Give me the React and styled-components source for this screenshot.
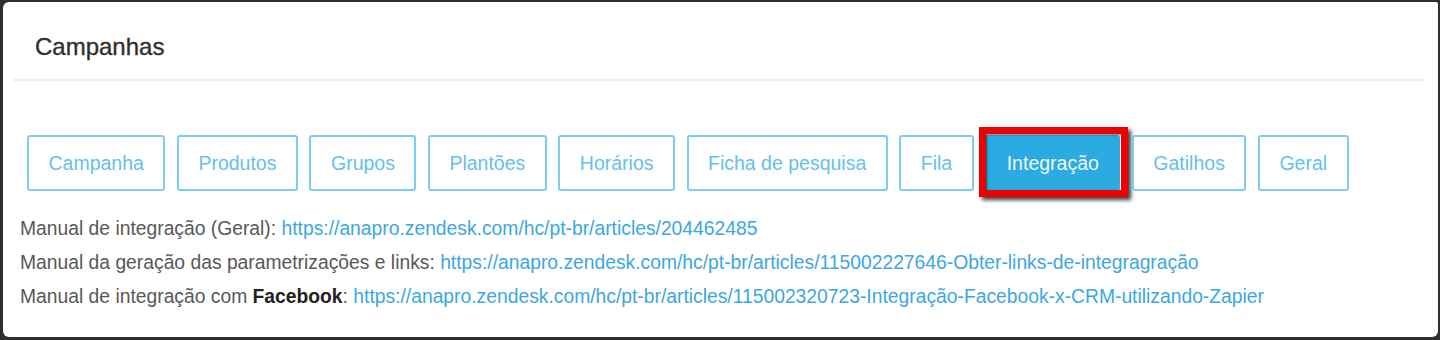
import React from "react";
import styled, {createGlobalStyle} from "styled-components";

const tabs = [
  "Campanha",
  "Produtos",
  "Grupos",
  "Plantões",
  "Horários",
  "Ficha de pesquisa",
  "Fila",
  "Integração",
  "Gatilhos",
  "Geral"
];

const App = () => {
  return <Frame>
    <GlobalStyle/>
    <Card>
      <Header>
        <Title>Campanhas</Title>
      </Header>
      <Tabs>
        {tabs.map(t => (
          <Tab key={t} $active={t === "Integração"}>
            {t}
            {t === "Integração" && <Highlight/>}
          </Tab>
        ))}
      </Tabs>
      <Links>
        <Line>
          Manual de integração (Geral):{" "}
          <Link href="#">https://anapro.zendesk.com/hc/pt-br/articles/204462485</Link>
        </Line>
        <Line>
          Manual da geração das parametrizações e links:{" "}
          <Link href="#">https://anapro.zendesk.com/hc/pt-br/articles/115002227646-Obter-links-de-integragração</Link>
        </Line>
        <Line>
          Manual de integração com <b>Facebook</b>:{" "}
          <Link href="#">https://anapro.zendesk.com/hc/pt-br/articles/115002320723-Integração-Facebook-x-CRM-utilizando-Zapier</Link>
        </Line>
      </Links>
    </Card>
  </Frame>
};

const GlobalStyle = createGlobalStyle`
  html, body {
    margin: 0;
    padding: 0;
    background: #2d2f31;
  }
  body {
    font-family: "Liberation Sans", Arial, sans-serif;
  }
`;

const Frame = styled.div`
  width: 1440px;
  height: 340px;
  box-sizing: border-box;
  padding: 2px 2px 3px 3px;
  background: #2d2f31;
`;

const Card = styled.div`
  height: 335px;
  background: #fff;
  border-radius: 6px 2px 6px 6px;
  overflow: hidden;
`;

const Header = styled.div`
  margin: 0 13px 0 10px;
  padding: 31px 0 18px 22px;
  border-bottom: 2px solid #eeeeee;
`;

const Title = styled.h1`
  margin: 0;
  font-size: 24px;
  line-height: 28px;
  font-weight: normal;
  color: #2f2f2f;
  -webkit-text-stroke: 0.35px #2f2f2f;
`;

const Tabs = styled.div`
  display: flex;
  gap: 11.5px;
  padding: 54px 0 0 24px;
`;

const Tab = styled.div`
  position: relative;
  height: 56px;
  box-sizing: border-box;
  display: flex;
  align-items: center;
  padding: 0 19.5px;
  border: 2px solid ${p => p.$active ? "#2aabe2" : "#7ccdf3"};
  border-radius: 3px;
  background: ${p => p.$active ? "#2aabe2" : "#fff"};
  color: ${p => p.$active ? "#eef8fd" : "#66bfec"};
  font-size: 19.5px;
  white-space: nowrap;
`;

const Highlight = styled.span`
  position: absolute;
  top: -10px;
  left: -8px;
  right: -10px;
  bottom: -8px;
  border: 7px solid #ee0000;
  box-shadow: 3px 3px 4px rgba(0, 0, 0, 0.75), inset 1px 1px 2px rgba(0, 0, 0, 0.55);
  pointer-events: none;
`;

const Links = styled.div`
  padding: 21px 0 0 17px;
`;

const Line = styled.div`
  font-size: 19.3px;
  line-height: 34px;
  color: #585858;
  white-space: nowrap;

  b {
    color: #222;
  }
`;

const Link = styled.a`
  color: #3ca7e3;
  text-decoration: none;
`;

export default App;
